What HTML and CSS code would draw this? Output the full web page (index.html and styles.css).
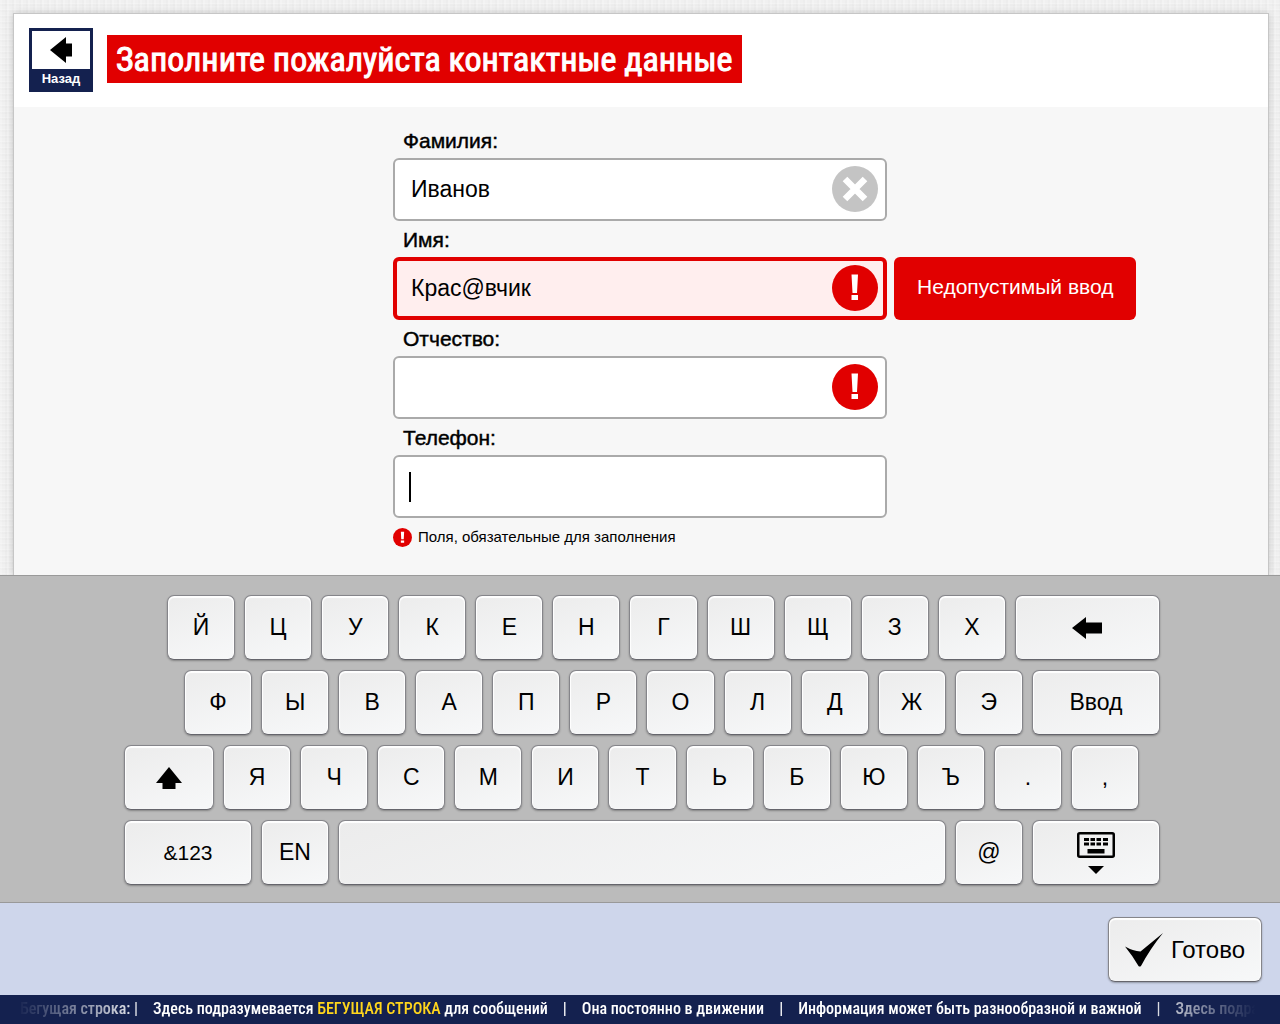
FILE: index.html
```html
<!DOCTYPE html>
<html lang="ru">
<head>
<meta charset="utf-8">
<meta name="viewport" content="width=device-width, initial-scale=1">
<title>Контактные данные</title>
<link rel="stylesheet" href="styles.css">
</head>
<body>
<main class="stage">
  <section class="panel">
    <header class="panel-head">
      <button class="back" type="button">
        <span class="back-icon"><svg width="22" height="26" viewBox="0 0 22 26" aria-hidden="true"><path d="M0 13 16 0v6.500h6v13h-6V26z"/></svg></span>
        <span class="back-text">Назад</span>
      </button>
      <h1 class="title">Заполните пожалуйста контактные данные</h1>
    </header>
    <form class="form" id="contact">
      <div class="row">
        <label class="label" for="surname">Фамилия:</label>
        <div class="field">
          <input class="input" id="surname" type="text" value="Иванов">
          <button class="badge clear" type="button" aria-label="Очистить"><svg viewBox="0 0 46 46" aria-hidden="true"><circle cx="23" cy="23" r="23"/><path d="M13 13 33 33M33 13 13 33" stroke="#fff" stroke-width="6.500"/></svg></button>
        </div>
      </div>
      <div class="row">
        <label class="label" for="name">Имя:</label>
        <div class="field">
          <input class="input invalid" id="name" type="text" value="Крас@вчик" aria-describedby="name-error">
          <span class="badge alert"><svg viewBox="0 0 46 46" aria-hidden="true"><circle cx="23" cy="23" r="23"/><path fill="#fff" d="M19.500 9.500h6.500L25 28h-4.500zM19.500 30h6.500v5h-6.500z"/></svg></span>
        </div>
        <p class="error" id="name-error">Недопустимый ввод</p>
      </div>
      <div class="row">
        <label class="label" for="patronymic">Отчество:</label>
        <div class="field">
          <input class="input" id="patronymic" type="text">
          <span class="badge alert"><svg viewBox="0 0 46 46" aria-hidden="true"><circle cx="23" cy="23" r="23"/><path fill="#fff" d="M19.500 9.500h6.500L25 28h-4.500zM19.500 30h6.500v5h-6.500z"/></svg></span>
        </div>
      </div>
      <div class="row">
        <label class="label" for="phone">Телефон:</label>
        <div class="field">
          <input class="input active" id="phone" type="tel">
        </div>
        <p class="hint"><svg class="alert" width="19" height="19" viewBox="0 0 46 46" aria-hidden="true"><circle cx="23" cy="23" r="23"/><path fill="#fff" d="M19 9h8l-1 18h-6zM19 30h8v6h-8z"/></svg>Поля, обязательные для заполнения</p>
      </div>
    </form>
  </section>
</main>

<section class="keyboard" aria-label="Клавиатура">
  <div class="keys">
    <div class="key-row row-1">
      <button class="key" type="button">Й</button><button class="key" type="button">Ц</button><button class="key" type="button">У</button><button class="key" type="button">К</button><button class="key" type="button">Е</button><button class="key" type="button">Н</button><button class="key" type="button">Г</button><button class="key" type="button">Ш</button><button class="key" type="button">Щ</button><button class="key" type="button">З</button><button class="key" type="button">Х</button>
      <button class="key erase" type="button" aria-label="Стереть"><svg width="30" height="22" viewBox="0 0 30 22" aria-hidden="true"><path d="M0 11 14 0v5.500h16v11H14V22z"/></svg></button>
    </div>
    <div class="key-row row-2">
      <button class="key" type="button">Ф</button><button class="key" type="button">Ы</button><button class="key" type="button">В</button><button class="key" type="button">А</button><button class="key" type="button">П</button><button class="key" type="button">Р</button><button class="key" type="button">О</button><button class="key" type="button">Л</button><button class="key" type="button">Д</button><button class="key" type="button">Ж</button><button class="key" type="button">Э</button>
      <button class="key wide" type="button">Ввод</button>
    </div>
    <div class="key-row row-3">
      <button class="key shift" type="button" aria-label="Верхний регистр"><svg width="26" height="22" viewBox="0 0 26 22" aria-hidden="true"><path d="M13 0 26 16h-6.500v6h-13v-6H0z"/></svg></button>
      <button class="key" type="button">Я</button><button class="key" type="button">Ч</button><button class="key" type="button">С</button><button class="key" type="button">М</button><button class="key" type="button">И</button><button class="key" type="button">Т</button><button class="key" type="button">Ь</button><button class="key" type="button">Б</button><button class="key" type="button">Ю</button><button class="key" type="button">Ъ</button><button class="key" type="button">.</button><button class="key" type="button">,</button>
    </div>
    <div class="key-row">
      <button class="key wide symbols" type="button">&amp;123</button>
      <button class="key" type="button">EN</button>
      <button class="key space" type="button" aria-label="Пробел"></button>
      <button class="key" type="button">@</button>
      <button class="key wide" type="button" aria-label="Скрыть клавиатуру"><svg width="38" height="42" viewBox="0 0 38 42" aria-hidden="true"><rect x="1.250" y="1.250" width="35.500" height="23.500" rx="1.500" fill="none" stroke="#000" stroke-width="2.500"/><path d="M7 6h5v3H7zM13.500 6h4.500v3h-4.500zM19.500 6H24v3h-4.500zM26 6h5v3h-5zM7 10.500h5v3H7zM13.500 10.500h4.500v3h-4.500zM19.500 10.500H24v3h-4.500zM26 10.500h5v3h-5zM10.500 17h17v4.500h-17zM11 34h16l-8 8z"/></svg></button>
    </div>
  </div>
</section>

<footer class="actions">
  <button class="key done" type="submit" form="contact"><svg width="38" height="34" viewBox="0 0 38 34" aria-hidden="true"><path d="M0 13.500Q8 18 15.500 18.500L38 0Q25 16 16 33q-1.500 1-2.500 0Q7 22 0 13.500z"/></svg>Готово</button>
</footer>

<div class="ticker">
  <div class="ticker-line">
    <span>Бегущая строка: |</span><span>Здесь подразумевается <b>БЕГУЩАЯ СТРОКА</b> для сообщений</span><i>|</i><span>Она постоянно в движении</span><i>|</i><span>Информация может быть разнообразной и важной</span><i>|</i><span>Здесь подразу</span>
  </div>
</div>
</body>
</html>
```
FILE: styles.css
```css
* { box-sizing: border-box; }

body {
  margin: 0;
  min-height: 100vh;
  display: flex;
  flex-direction: column;
  font-family: "Liberation Sans", Arial, sans-serif;
  color: #000;
  background-color: #f0f0f0;
  background-image:
    repeating-linear-gradient(90deg, rgba(255,255,255,.2) 0 2px, transparent 2px 5px, rgba(0,0,0,.01) 5px 7px),
    repeating-linear-gradient(0deg, rgba(255,255,255,.2) 0 1px, transparent 1px 4px, rgba(0,0,0,.01) 4px 6px);
}

button { font-family: inherit; color: inherit; cursor: pointer; }
p, h1 { margin: 0; }

.stage {
  flex: 1;
  display: flex;
  padding: 14px 12px 0 14px;
  overflow: hidden;
}

.panel {
  flex: 1;
  background: #f7f7f7;
  box-shadow: 0 0 0 1px #c6c6c6, 0 0 8px rgba(0,0,0,.22);
}

.panel-head {
  display: flex;
  align-items: center;
  gap: 14px;
  padding: 14px 15px 15px;
  background: #fff;
}

.back {
  width: 64px;
  height: 64px;
  padding: 0;
  display: flex;
  flex-direction: column;
  border: 3px solid #14214f;
  background: #14214f;
  color: #fff;
  font-size: 13px;
  font-weight: bold;
  line-height: 20px;
}

.back-icon {
  flex: 1;
  width: 100%;
  display: flex;
  align-items: center;
  justify-content: center;
  background: #fff;
}

.back-text { width: 100%; }

.title {
  margin-bottom: 2px;
  padding: 0 10px 0 9px;
  background: #e10000;
  color: #fff;
  font-family: "Roboto Condensed", "Liberation Sans", sans-serif;
  font-size: 34px;
  font-weight: 400;
  line-height: 48px;
  -webkit-text-stroke: 1px #fff;
}

.form { padding: 15px 2px 0 0; }

.row {
  display: grid;
  grid-template-columns: 1fr minmax(0, 494px) 1fr;
  grid-template-rows: 36px 63px;
  column-gap: 7px;
}

.label {
  grid-column: 2;
  padding: 7px 10px 0;
  font-size: 21px;
  line-height: 24px;
  -webkit-text-stroke: 1px #000;
  -webkit-text-stroke-width: thin;
}

.field {
  grid-column: 2;
  grid-row: 2;
  position: relative;
}

.input {
  width: 100%;
  height: 100%;
  padding: 0 64px 0 16px;
  border: 2px solid #aaa;
  border-radius: 6px;
  outline: 0;
  background: #fff;
  font-family: inherit;
  font-size: 23px;
  color: #000;
}

.input.invalid {
  padding-left: 14px;
  border: 4px solid #e10000;
  background: #ffeeee;
}

.input.active {
  background: #fff linear-gradient(#000, #000) 14px center / 2px 30px no-repeat;
}

.badge {
  position: absolute;
  top: 8px;
  right: 9px;
  width: 46px;
  height: 46px;
  padding: 0;
  border: 0;
  background: none;
}

.badge svg { display: block; }
.clear { fill: #c4c4c4; }
.alert { fill: #e10000; }

.error {
  grid-column: 3;
  grid-row: 2;
  justify-self: start;
  padding: 0 23px;
  border-radius: 6px;
  background: #e10000;
  color: #fff;
  font-size: 21px;
  line-height: 60px;
}

.hint {
  grid-column: 2;
  display: flex;
  align-items: center;
  gap: 6px;
  padding: 8px 0 27px;
  font-size: 15px;
  line-height: 22px;
}

.keyboard {
  padding: 19px 12px 17px 16px;
  border-top: 1px solid #9a9a9a;
  border-bottom: 1px solid #999;
  background: #bbb;
}

.keys {
  max-width: 1036px;
  margin: 0 auto;
  display: grid;
  gap: 10px;
}

.key-row { display: flex; gap: 9px; }
.row-1 { padding-left: 43px; }
.row-2 { padding-left: 60px; }
.row-3 { padding-right: 21px; }

.key {
  --size: 68;
  flex: var(--size) 1 calc(var(--size) * 1px);
  min-width: 0;
  height: 65px;
  padding: 0;
  display: flex;
  align-items: center;
  justify-content: center;
  border: 1px solid #85858a;
  border-bottom-color: #65656c;
  border-radius: 7px;
  background: linear-gradient(160deg, #ececec, #f7f8f9);
  box-shadow: inset 0 1px 1px 1px #fff, 0 1px 2px rgba(0,0,0,.3);
  font-size: 23px;
}

.erase { --size: 145; }
.wide { --size: 128; }
.shift { --size: 90; }
.space { --size: 608; }
.symbols { font-size: 21px; }

.actions {
  display: flex;
  justify-content: flex-end;
  padding: 14px 18px 13px;
  background: #ced6eb;
}

.done {
  flex: none;
  gap: 8px;
  padding: 0 16px;
  font-size: 24px;
}

.ticker {
  height: 29px;
  overflow: hidden;
  background: #14214f;
}

.ticker-line {
  display: flex;
  gap: 15px;
  padding-left: 20px;
  color: #fff;
  font-family: "Roboto Condensed", "Liberation Sans", sans-serif;
  font-size: 16px;
  font-weight: 500;
  line-height: 28px;
  white-space: nowrap;
  -webkit-mask-image: linear-gradient(90deg, transparent 16px, #000 150px, #000 calc(100% - 140px), transparent calc(100% - 24px));
  mask-image: linear-gradient(90deg, transparent 16px, #000 150px, #000 calc(100% - 140px), transparent calc(100% - 24px));
}

.ticker-line i { font-style: normal; }
.ticker-line b { color: #ffd61c; font-weight: inherit; }
```
